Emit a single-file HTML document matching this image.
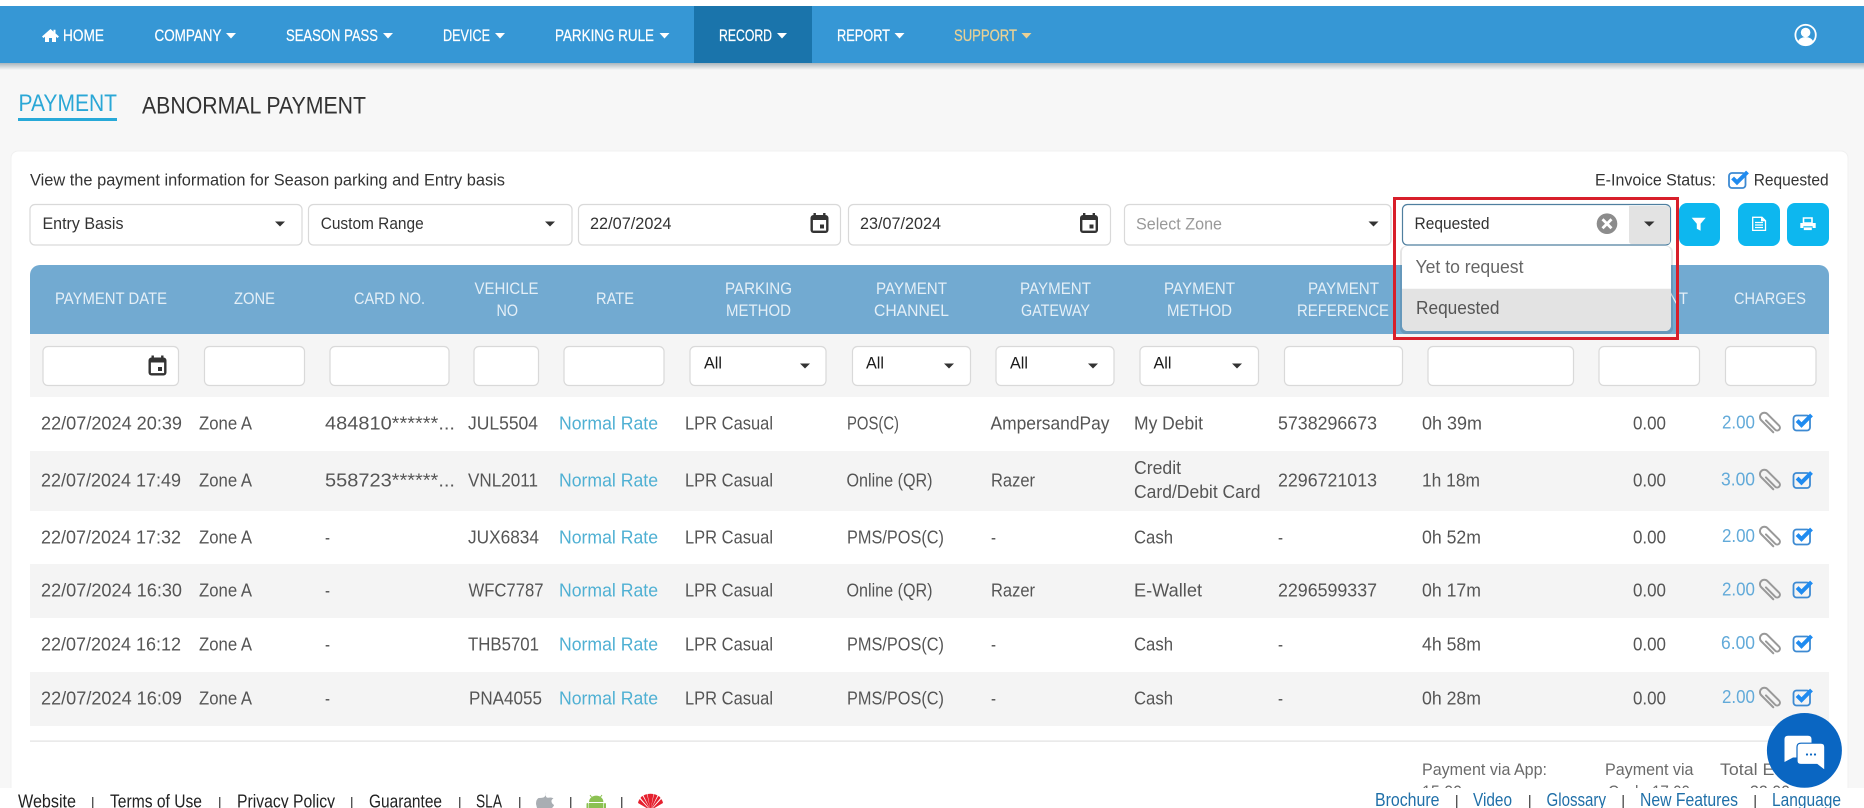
<!DOCTYPE html>
<html lang="en"><head><meta charset="utf-8"><title>Payment</title>
<style>
html,body{margin:0;padding:0;width:1864px;height:808px;overflow:hidden;background:#f7f7f7}
svg{display:block}
text{font-family:"Liberation Sans",sans-serif;white-space:pre}
.n{font-size:17px;fill:#fff;stroke:#fff;stroke-width:.25;transform:translateY(-1px)}
.v{font-size:17px;fill:#333}
.s{font-size:17px;fill:#333}
.h{font-size:16.5px;fill:#e4eff7;transform:translateY(-.6px)}
.r{font-size:18px;fill:#555;transform:translateY(-.8px)}
.l{font-size:18px;fill:#4fb0d3;transform:translateY(-.8px)}
.c{font-size:18px;fill:#62aad9;transform:translateY(-.8px)}
.a{font-size:16.5px;fill:#1c1c1c;transform:translateY(-.5px)}
.f{font-size:18px;fill:#222}
.g{font-size:18px;fill:#1f6fa8}
.p{font-size:17px;fill:#6a6a6a}
.b{fill:#fff;stroke:#d9d9d9;stroke-width:1.2}
symbol{overflow:visible}
</style></head><body>
<svg width="1864" height="808" viewBox="0 0 1864 808" xmlns="http://www.w3.org/2000/svg">
<defs>
<linearGradient id="sh" x1="0" y1="0" x2="0" y2="1"><stop offset="0" stop-color="#aab5bc"/><stop offset="1" stop-color="#f7f7f7"/></linearGradient>
<symbol id="cal" viewBox="0 0 18 20" width="18" height="20"><rect x="3" y="0" width="2.4" height="4" fill="#333"/><rect x="12.6" y="0" width="2.4" height="4" fill="#333"/><rect x="0" y="2" width="18" height="18" rx="3" fill="#333"/><rect x="2.4" y="7" width="13.2" height="10.6" fill="#fff"/><rect x="9.5" y="11.5" width="4" height="4" fill="#333"/></symbol>
<symbol id="clip" viewBox="0 0 20 20" width="20" height="20"><g transform="translate(10 10) rotate(-45)"><path d="M-1.4 -5 L-1.4 8 A2.8 2.8 0 0 0 4.2 8 L4.2 -8.5 A4.4 4.4 0 0 0 -4.6 -8.5 L-4.6 8.5" fill="none" stroke="#999" stroke-width="2" stroke-linecap="round"/></g></symbol>
<symbol id="chk" viewBox="0 0 21 18" width="21" height="18"><rect x="1" y="2.5" width="16.5" height="15" rx="3" fill="none" stroke="#3d8ad2" stroke-width="1.8"/><path d="M4.6 7.6 L9 12 L19 2" fill="none" stroke="#1f8bf0" stroke-width="4"/></symbol>
</defs>

<rect width="1864" height="808" fill="#f7f7f7"/>
<rect width="1864" height="6" fill="#fff"/>
<rect y="63" width="1864" height="7" fill="url(#sh)"/>
<rect y="6" width="1864" height="57" fill="#3697d5"/>
<rect x="694" y="6" width="118" height="57" fill="#1a74ab"/>

<path d="M50.5 29 L42 36.5 L43.5 38 L45 36.8 V42 H49 V38 H52 V42 H56 V36.8 L57.5 38 L59 36.5 L55.5 33.4 V29.8 H53.5 V31.6 Z" fill="#fff"/>
<text class="n" x="63" y="42" textLength="41" lengthAdjust="spacingAndGlyphs">HOME</text>
<text class="n" x="154.5" y="42" textLength="67" lengthAdjust="spacingAndGlyphs">COMPANY</text>
<path d="M226 33h10l-5 5.5z" fill="#fff"/>
<text class="n" x="286" y="42" textLength="92" lengthAdjust="spacingAndGlyphs">SEASON PASS</text>
<path d="M383 33h10l-5 5.5z" fill="#fff"/>
<text class="n" x="443" y="42" textLength="47" lengthAdjust="spacingAndGlyphs">DEVICE</text>
<path d="M495 33h10l-5 5.5z" fill="#fff"/>
<text class="n" x="555" y="42" textLength="99" lengthAdjust="spacingAndGlyphs">PARKING RULE</text>
<path d="M659.5 33h10l-5 5.5z" fill="#fff"/>
<text class="n" x="719" y="42" textLength="53" lengthAdjust="spacingAndGlyphs">RECORD</text>
<path d="M777 33h10l-5 5.5z" fill="#fff"/>
<text class="n" x="837" y="42" textLength="53" lengthAdjust="spacingAndGlyphs">REPORT</text>
<path d="M894.5 33h10l-5 5.5z" fill="#fff"/>
<text class="n" x="954" y="42" textLength="63" lengthAdjust="spacingAndGlyphs" style="fill:#e9d195;stroke:#e9d195">SUPPORT</text>
<path d="M1021.5 33h10l-5 5.5z" fill="#e9d195"/>

<circle cx="1805.6" cy="35" r="10.2" fill="none" stroke="#fff" stroke-width="1.8"/>
<circle cx="1805.6" cy="32.5" r="4.8" fill="#fff"/>
<path d="M1797.8 42 a8 6.5 0 0 1 15.6 0 a10 10 0 0 1 -15.6 0z" fill="#fff"/>

<text x="18.5" y="111" textLength="98.5" lengthAdjust="spacingAndGlyphs" style="font-size:24px;fill:#2aa7d6">PAYMENT</text>
<rect x="18" y="118" width="99" height="3" fill="#27a9d8"/>
<text x="142" y="113.5" textLength="224" lengthAdjust="spacingAndGlyphs" style="font-size:24px;fill:#333">ABNORMAL PAYMENT</text>

<rect x="11" y="151" width="1837" height="660" rx="7" fill="#fff" stroke="#f0f0f0"/>

<text class="v" x="30" y="185.5" textLength="475" lengthAdjust="spacingAndGlyphs">View the payment information for Season parking and Entry basis</text>
<text class="v" x="1595" y="185.5" textLength="121" lengthAdjust="spacingAndGlyphs">E-Invoice Status:</text>
<rect x="1729" y="173" width="16.5" height="15" rx="3" fill="none" stroke="#3d8ad2" stroke-width="1.8"/>
<path d="M1732.6 178 L1737 182.4 L1747.5 172" fill="none" stroke="#1f8bf0" stroke-width="4"/>
<text class="v" x="1753.7" y="185.5" textLength="75" lengthAdjust="spacingAndGlyphs">Requested</text>

<rect class="b" x="30" y="204.5" width="272" height="40.5" rx="5"/>
<text class="s" x="42.5" y="229" textLength="81" lengthAdjust="spacingAndGlyphs">Entry Basis</text>
<path d="M275 221.5h10l-5 5z" fill="#333"/>
<rect class="b" x="308.5" y="204.5" width="263.5" height="40.5" rx="5"/>
<text class="s" x="320.7" y="229" textLength="103" lengthAdjust="spacingAndGlyphs">Custom Range</text>
<path d="M545 221.5h10l-5 5z" fill="#333"/>
<rect class="b" x="578.5" y="204.5" width="262" height="40.5" rx="5"/>
<text class="s" x="590" y="229" textLength="81.5" lengthAdjust="spacingAndGlyphs">22/07/2024</text>
<use href="#cal" x="810.5" y="213"/>
<rect class="b" x="848.5" y="204.5" width="262" height="40.5" rx="5"/>
<text class="s" x="860" y="229" textLength="81" lengthAdjust="spacingAndGlyphs">23/07/2024</text>
<use href="#cal" x="1080" y="213"/>
<rect class="b" x="1124.5" y="204.5" width="266.5" height="40.5" rx="5"/>
<text class="s" x="1136" y="229.5" textLength="86" lengthAdjust="spacingAndGlyphs" style="fill:#999">Select Zone</text>
<path d="M1368.5 221.5h10l-5 5z" fill="#333"/>

<rect x="1679" y="203" width="41" height="43" rx="8" fill="#0db7ef"/>
<path d="M1691.7 217.7 H1705.7 L1700.6 223.8 V230.7 L1696.8 228.8 V223.8 Z" fill="#fff"/>
<rect x="1738" y="203" width="42" height="43" rx="8" fill="#0db7ef"/>
<path d="M1752.7 217.3 H1762 L1765.5 220.8 V230.4 H1752.7 Z" fill="none" stroke="#fff" stroke-width="1.3"/>
<path d="M1755 222.5h8M1755 225h8M1755 227.5h8" stroke="#fff" stroke-width="1.2"/>
<path d="M1761 217.3 v4 h4.5" fill="#fff"/>
<rect x="1787" y="203" width="42" height="43" rx="8" fill="#0db7ef"/>
<path d="M1803.5 218 H1812 V223 H1803.5 Z" fill="none" stroke="#fff" stroke-width="1.6"/>
<path d="M1800.3 223 H1815.7 V228 H1812.6 V226.2 H1803.4 V228 H1800.3 Z" fill="#fff"/>
<rect x="1803.8" y="227.4" width="8" height="2.7" fill="#fff"/>

<rect x="30" y="265" width="1799" height="69" fill="#72aad1"/>
<path d="M30 275 V265 H40 A10 10 0 0 0 30 275Z" fill="#fff"/>
<path d="M1829 275 V265 H1819 A10 10 0 0 1 1829 275Z" fill="#fff"/>

<text class="h" x="55" y="304.5" textLength="112" lengthAdjust="spacingAndGlyphs">PAYMENT DATE</text>
<text class="h" x="234" y="304.5" textLength="41" lengthAdjust="spacingAndGlyphs">ZONE</text>
<text class="h" x="354" y="304.5" textLength="71" lengthAdjust="spacingAndGlyphs">CARD NO.</text>
<text class="h" x="474.5" y="294.5" textLength="64" lengthAdjust="spacingAndGlyphs">VEHICLE</text>
<text class="h" x="496.5" y="316.5" textLength="21.5" lengthAdjust="spacingAndGlyphs">NO</text>
<text class="h" x="596" y="304.5" textLength="38" lengthAdjust="spacingAndGlyphs">RATE</text>
<text class="h" x="725" y="294.5" textLength="67" lengthAdjust="spacingAndGlyphs">PARKING</text>
<text class="h" x="726" y="316.5" textLength="65" lengthAdjust="spacingAndGlyphs">METHOD</text>
<text class="h" x="876" y="294.5" textLength="71" lengthAdjust="spacingAndGlyphs">PAYMENT</text>
<text class="h" x="874" y="316.5" textLength="75" lengthAdjust="spacingAndGlyphs">CHANNEL</text>
<text class="h" x="1020" y="294.5" textLength="71" lengthAdjust="spacingAndGlyphs">PAYMENT</text>
<text class="h" x="1021" y="316.5" textLength="69" lengthAdjust="spacingAndGlyphs">GATEWAY</text>
<text class="h" x="1164" y="294.5" textLength="71" lengthAdjust="spacingAndGlyphs">PAYMENT</text>
<text class="h" x="1167" y="316.5" textLength="65" lengthAdjust="spacingAndGlyphs">METHOD</text>
<text class="h" x="1308" y="294.5" textLength="71" lengthAdjust="spacingAndGlyphs">PAYMENT</text>
<text class="h" x="1297" y="316.5" textLength="92" lengthAdjust="spacingAndGlyphs">REFERENCE</text>
<text class="h" x="1610" y="304.5" textLength="78" lengthAdjust="spacingAndGlyphs">DISCOUNT</text>
<text class="h" x="1734" y="304.5" textLength="72" lengthAdjust="spacingAndGlyphs">CHARGES</text>

<rect x="30" y="334" width="1799" height="63" fill="#f5f5f5"/>
<rect class="b" x="43" y="346.5" width="135.5" height="39" rx="5"/>
<use href="#cal" x="148.5" y="355.5"/>
<rect class="b" x="204.5" y="346.5" width="100" height="39" rx="5"/>
<rect class="b" x="330" y="346.5" width="119" height="39" rx="5"/>
<rect class="b" x="474" y="346.5" width="64.5" height="39" rx="5"/>
<rect class="b" x="564" y="346.5" width="100" height="39" rx="5"/>
<rect class="b" x="690" y="346.5" width="136" height="39" rx="5"/>
<text class="a" x="704" y="369" textLength="18" lengthAdjust="spacingAndGlyphs">All</text>
<path d="M800 363.5h10l-5 5z" fill="#333"/>
<rect class="b" x="852.5" y="346.5" width="118" height="39" rx="5"/>
<text class="a" x="866" y="369" textLength="18" lengthAdjust="spacingAndGlyphs">All</text>
<path d="M944 363.5h10l-5 5z" fill="#333"/>
<rect class="b" x="996" y="346.5" width="118" height="39" rx="5"/>
<text class="a" x="1010" y="369" textLength="18" lengthAdjust="spacingAndGlyphs">All</text>
<path d="M1088 363.5h10l-5 5z" fill="#333"/>
<rect class="b" x="1140" y="346.5" width="118.5" height="39" rx="5"/>
<text class="a" x="1153.5" y="369" textLength="18" lengthAdjust="spacingAndGlyphs">All</text>
<path d="M1232 363.5h10l-5 5z" fill="#333"/>
<rect class="b" x="1284.5" y="346.5" width="118" height="39" rx="5"/>
<rect class="b" x="1428" y="346.5" width="145.5" height="39" rx="5"/>
<rect class="b" x="1599" y="346.5" width="100.5" height="39" rx="5"/>
<rect class="b" x="1725.5" y="346.5" width="90.5" height="39" rx="5"/>

<rect x="30" y="451" width="1799" height="60" fill="#f4f4f4"/>
<rect x="30" y="564" width="1799" height="54" fill="#f4f4f4"/>
<rect x="30" y="672" width="1799" height="54" fill="#f4f4f4"/>
<rect x="30" y="740.5" width="1799" height="1.2" fill="#e2e2e2"/>

<!-- row 1 -->
<text class="r" x="41" y="430.5" textLength="141" lengthAdjust="spacingAndGlyphs">22/07/2024 20:39</text>
<text class="r" x="199" y="430.5" textLength="53" lengthAdjust="spacingAndGlyphs">Zone A</text>
<text class="r" x="325" y="430.5" textLength="130" lengthAdjust="spacingAndGlyphs">484810******...</text>
<text class="r" x="468" y="430.5" textLength="70" lengthAdjust="spacingAndGlyphs">JUL5504</text>
<text class="l" x="559" y="430.5" textLength="99" lengthAdjust="spacingAndGlyphs">Normal Rate</text>
<text class="r" x="685" y="430.5" textLength="88" lengthAdjust="spacingAndGlyphs">LPR Casual</text>
<text class="r" x="847" y="430.5" textLength="52" lengthAdjust="spacingAndGlyphs">POS(C)</text>
<text class="r" x="990.5" y="430.5" textLength="119" lengthAdjust="spacingAndGlyphs">AmpersandPay</text>
<text class="r" x="1134" y="430.5" textLength="69" lengthAdjust="spacingAndGlyphs">My Debit</text>
<text class="r" x="1278" y="430.5" textLength="99" lengthAdjust="spacingAndGlyphs">5738296673</text>
<text class="r" x="1422" y="430.5" textLength="60" lengthAdjust="spacingAndGlyphs">0h 39m</text>
<text class="r" x="1633" y="430.5" textLength="33" lengthAdjust="spacingAndGlyphs">0.00</text>
<text class="c" x="1722" y="429.5" textLength="33" lengthAdjust="spacingAndGlyphs">2.00</text>
<use href="#clip" x="1760.5" y="413"/><use href="#chk" x="1792.5" y="413"/>
<!-- row 2 -->
<text class="r" x="41" y="487.5" textLength="140" lengthAdjust="spacingAndGlyphs">22/07/2024 17:49</text>
<text class="r" x="199" y="487.5" textLength="53" lengthAdjust="spacingAndGlyphs">Zone A</text>
<text class="r" x="325" y="487.5" textLength="130" lengthAdjust="spacingAndGlyphs">558723******...</text>
<text class="r" x="468" y="487.5" textLength="70" lengthAdjust="spacingAndGlyphs">VNL2011</text>
<text class="l" x="559" y="487.5" textLength="99" lengthAdjust="spacingAndGlyphs">Normal Rate</text>
<text class="r" x="685" y="487.5" textLength="88" lengthAdjust="spacingAndGlyphs">LPR Casual</text>
<text class="r" x="846.5" y="487.5" textLength="86" lengthAdjust="spacingAndGlyphs">Online (QR)</text>
<text class="r" x="991" y="487.5" textLength="44" lengthAdjust="spacingAndGlyphs">Razer</text>
<text class="r" x="1134" y="475" textLength="47" lengthAdjust="spacingAndGlyphs">Credit</text>
<text class="r" x="1134" y="499" textLength="126.5" lengthAdjust="spacingAndGlyphs">Card/Debit Card</text>
<text class="r" x="1278" y="487.5" textLength="99" lengthAdjust="spacingAndGlyphs">2296721013</text>
<text class="r" x="1422" y="487.5" textLength="58" lengthAdjust="spacingAndGlyphs">1h 18m</text>
<text class="r" x="1633" y="487.5" textLength="33" lengthAdjust="spacingAndGlyphs">0.00</text>
<text class="c" x="1721" y="486.5" textLength="34" lengthAdjust="spacingAndGlyphs">3.00</text>
<use href="#clip" x="1760.5" y="470"/><use href="#chk" x="1792.5" y="470.5"/>
<!-- row 3 -->
<text class="r" x="41" y="544.5" textLength="140" lengthAdjust="spacingAndGlyphs">22/07/2024 17:32</text>
<text class="r" x="199" y="544.5" textLength="53" lengthAdjust="spacingAndGlyphs">Zone A</text>
<text class="r" x="325" y="544.5" textLength="5" lengthAdjust="spacingAndGlyphs">-</text>
<text class="r" x="468" y="544.5" textLength="71" lengthAdjust="spacingAndGlyphs">JUX6834</text>
<text class="l" x="559" y="544.5" textLength="99" lengthAdjust="spacingAndGlyphs">Normal Rate</text>
<text class="r" x="685" y="544.5" textLength="88" lengthAdjust="spacingAndGlyphs">LPR Casual</text>
<text class="r" x="847" y="544.5" textLength="97" lengthAdjust="spacingAndGlyphs">PMS/POS(C)</text>
<text class="r" x="991" y="544.5" textLength="5" lengthAdjust="spacingAndGlyphs">-</text>
<text class="r" x="1134" y="544.5" textLength="39" lengthAdjust="spacingAndGlyphs">Cash</text>
<text class="r" x="1278" y="544.5" textLength="5" lengthAdjust="spacingAndGlyphs">-</text>
<text class="r" x="1422" y="544.5" textLength="59" lengthAdjust="spacingAndGlyphs">0h 52m</text>
<text class="r" x="1633" y="544.5" textLength="33" lengthAdjust="spacingAndGlyphs">0.00</text>
<text class="c" x="1722" y="543" textLength="33" lengthAdjust="spacingAndGlyphs">2.00</text>
<use href="#clip" x="1760.5" y="527"/><use href="#chk" x="1792.5" y="527"/>
<!-- row 4 -->
<text class="r" x="41" y="597.5" textLength="141" lengthAdjust="spacingAndGlyphs">22/07/2024 16:30</text>
<text class="r" x="199" y="597.5" textLength="53" lengthAdjust="spacingAndGlyphs">Zone A</text>
<text class="r" x="325" y="597.5" textLength="5" lengthAdjust="spacingAndGlyphs">-</text>
<text class="r" x="468.5" y="597.5" textLength="75" lengthAdjust="spacingAndGlyphs">WFC7787</text>
<text class="l" x="559" y="597.5" textLength="99" lengthAdjust="spacingAndGlyphs">Normal Rate</text>
<text class="r" x="685" y="597.5" textLength="88" lengthAdjust="spacingAndGlyphs">LPR Casual</text>
<text class="r" x="846.5" y="597.5" textLength="86" lengthAdjust="spacingAndGlyphs">Online (QR)</text>
<text class="r" x="991" y="597.5" textLength="44" lengthAdjust="spacingAndGlyphs">Razer</text>
<text class="r" x="1134" y="597.5" textLength="68" lengthAdjust="spacingAndGlyphs">E-Wallet</text>
<text class="r" x="1278" y="597.5" textLength="99" lengthAdjust="spacingAndGlyphs">2296599337</text>
<text class="r" x="1422" y="597.5" textLength="59" lengthAdjust="spacingAndGlyphs">0h 17m</text>
<text class="r" x="1633" y="597.5" textLength="33" lengthAdjust="spacingAndGlyphs">0.00</text>
<text class="c" x="1722" y="596.5" textLength="33" lengthAdjust="spacingAndGlyphs">2.00</text>
<use href="#clip" x="1760.5" y="580"/><use href="#chk" x="1792.5" y="580"/>
<!-- row 5 -->
<text class="r" x="41" y="651.5" textLength="140" lengthAdjust="spacingAndGlyphs">22/07/2024 16:12</text>
<text class="r" x="199" y="651.5" textLength="53" lengthAdjust="spacingAndGlyphs">Zone A</text>
<text class="r" x="325" y="651.5" textLength="5" lengthAdjust="spacingAndGlyphs">-</text>
<text class="r" x="468" y="651.5" textLength="71" lengthAdjust="spacingAndGlyphs">THB5701</text>
<text class="l" x="559" y="651.5" textLength="99" lengthAdjust="spacingAndGlyphs">Normal Rate</text>
<text class="r" x="685" y="651.5" textLength="88" lengthAdjust="spacingAndGlyphs">LPR Casual</text>
<text class="r" x="847" y="651.5" textLength="97" lengthAdjust="spacingAndGlyphs">PMS/POS(C)</text>
<text class="r" x="991" y="651.5" textLength="5" lengthAdjust="spacingAndGlyphs">-</text>
<text class="r" x="1134" y="651.5" textLength="39" lengthAdjust="spacingAndGlyphs">Cash</text>
<text class="r" x="1278" y="651.5" textLength="5" lengthAdjust="spacingAndGlyphs">-</text>
<text class="r" x="1422" y="651.5" textLength="59" lengthAdjust="spacingAndGlyphs">4h 58m</text>
<text class="r" x="1633" y="651.5" textLength="33" lengthAdjust="spacingAndGlyphs">0.00</text>
<text class="c" x="1721" y="650" textLength="34" lengthAdjust="spacingAndGlyphs">6.00</text>
<use href="#clip" x="1760.5" y="634"/><use href="#chk" x="1792.5" y="634"/>
<!-- row 6 -->
<text class="r" x="41" y="705.5" textLength="141" lengthAdjust="spacingAndGlyphs">22/07/2024 16:09</text>
<text class="r" x="199" y="705.5" textLength="53" lengthAdjust="spacingAndGlyphs">Zone A</text>
<text class="r" x="325" y="705.5" textLength="5" lengthAdjust="spacingAndGlyphs">-</text>
<text class="r" x="469" y="705.5" textLength="73" lengthAdjust="spacingAndGlyphs">PNA4055</text>
<text class="l" x="559" y="705.5" textLength="99" lengthAdjust="spacingAndGlyphs">Normal Rate</text>
<text class="r" x="685" y="705.5" textLength="88" lengthAdjust="spacingAndGlyphs">LPR Casual</text>
<text class="r" x="847" y="705.5" textLength="97" lengthAdjust="spacingAndGlyphs">PMS/POS(C)</text>
<text class="r" x="991" y="705.5" textLength="5" lengthAdjust="spacingAndGlyphs">-</text>
<text class="r" x="1134" y="705.5" textLength="39" lengthAdjust="spacingAndGlyphs">Cash</text>
<text class="r" x="1278" y="705.5" textLength="5" lengthAdjust="spacingAndGlyphs">-</text>
<text class="r" x="1422" y="705.5" textLength="59" lengthAdjust="spacingAndGlyphs">0h 28m</text>
<text class="r" x="1633" y="705.5" textLength="33" lengthAdjust="spacingAndGlyphs">0.00</text>
<text class="c" x="1722" y="704" textLength="33" lengthAdjust="spacingAndGlyphs">2.00</text>
<use href="#clip" x="1760.5" y="688"/><use href="#chk" x="1792.5" y="688"/>

<!-- summary -->
<text class="p" x="1422" y="775" textLength="125" lengthAdjust="spacingAndGlyphs">Payment via App:</text>
<text class="p" x="1422" y="797" textLength="40" lengthAdjust="spacingAndGlyphs">15.00</text>
<text class="p" x="1605" y="775" textLength="88.5" lengthAdjust="spacingAndGlyphs">Payment via</text>
<text class="p" x="1608" y="797" textLength="82" lengthAdjust="spacingAndGlyphs">Cash: 17.00</text>
<text class="p" x="1720" y="775" textLength="80" lengthAdjust="spacingAndGlyphs">Total Earn</text>
<text class="p" x="1750" y="797" textLength="40" lengthAdjust="spacingAndGlyphs">32.00</text>

<!-- dropdown -->
<rect x="1402.5" y="204.5" width="268" height="40.5" rx="5" fill="#fff" stroke="#4f7f9f" stroke-width="1.2"/>
<text class="s" x="1414.5" y="229" textLength="75" lengthAdjust="spacingAndGlyphs">Requested</text>
<circle cx="1607" cy="223.7" r="10.3" fill="#8c8c8c"/>
<path d="M1602.5 219.2 L1611.5 228.2 M1611.5 219.2 L1602.5 228.2" stroke="#fff" stroke-width="2.8"/>
<path d="M1629 206 H1667 Q1670 206 1670 209 V241 Q1670 244 1667 244 H1632 Q1629 244 1629 241 Z" fill="#e3e3e3"/>
<path d="M1644 221.5h10.5l-5.2 5z" fill="#333"/>

<rect x="1400" y="246" width="273" height="88" rx="6" fill="#000" opacity=".1"/>
<rect x="1402" y="246" width="269" height="85" rx="6" fill="#fff"/>
<path d="M1402 288.7 H1671 V325 Q1671 331 1665 331 H1408 Q1402 331 1402 325 Z" fill="#e3e3e3"/>
<text class="r" x="1415.5" y="274" textLength="108" lengthAdjust="spacingAndGlyphs" style="fill:#666">Yet to request</text>
<text class="r" x="1416" y="315" textLength="83.5" lengthAdjust="spacingAndGlyphs" style="fill:#555">Requested</text>

<rect x="1394.5" y="198.5" width="283" height="140" fill="none" stroke="#d81f2a" stroke-width="3"/>

<!-- chat -->
<ellipse cx="1804.4" cy="750.4" rx="37.5" ry="37.4" fill="#0a66c2"/>
<path d="M1788 735.7 H1808 Q1811.5 735.7 1811.5 739 V754 Q1811.5 757.5 1808 757.5 H1793 L1784.5 762 V739 Q1784.5 735.7 1788 735.7 Z" fill="#fff"/>
<path d="M1801 743.2 H1821 Q1824.8 743.2 1824.8 747 V770.5 L1817 764.5 H1801 Q1797 764.5 1797 761 V747 Q1797 743.2 1801 743.2 Z" fill="#fff" stroke="#0a66c2" stroke-width="1.2"/>
<circle cx="1807" cy="754.5" r="1.1" fill="#0a66c2"/><circle cx="1811" cy="754.5" r="1.1" fill="#0a66c2"/><circle cx="1815" cy="754.5" r="1.1" fill="#0a66c2"/>

<!-- footer -->
<rect y="788" width="1864" height="20" fill="#fff"/>
<text class="f" x="18" y="807.5" textLength="58" lengthAdjust="spacingAndGlyphs">Website</text>
<rect x="92" y="797" width="1.4" height="11" fill="#555"/>
<text class="f" x="110" y="807.5" textLength="92" lengthAdjust="spacingAndGlyphs">Terms of Use</text>
<rect x="219" y="797" width="1.4" height="11" fill="#555"/>
<text class="f" x="237" y="807.5" textLength="98" lengthAdjust="spacingAndGlyphs">Privacy Policy</text>
<rect x="351" y="797" width="1.4" height="11" fill="#555"/>
<text class="f" x="369" y="807.5" textLength="73" lengthAdjust="spacingAndGlyphs">Guarantee</text>
<rect x="459" y="797" width="1.4" height="11" fill="#555"/>
<text class="f" x="476" y="807.5" textLength="26" lengthAdjust="spacingAndGlyphs">SLA</text>
<rect x="519" y="797" width="1.4" height="11" fill="#555"/>
<path d="M546 792 Q546.5 796 543.5 797.5 Q541.5 798 538.5 798 Q536 799.5 536 804 L537 808 H552 Q554 806 554 805 Q551 803 551.5 800.5 Q552 799 553.5 798.5 Q551.5 797 548 797.8 Q545 798 546 792Z" fill="#a9aeb3"/>
<rect x="570" y="797" width="1.4" height="11" fill="#555"/>
<path d="M590 795 l1.5 2 M602 795 l-1.5 2" stroke="#8cc152" stroke-width="1"/>
<path d="M589 802 a7.2 6.4 0 0 1 14.4 0 Z" fill="#8cc152"/>
<rect x="589" y="803" width="14.4" height="6" fill="#8cc152"/>
<rect x="586.5" y="803" width="2" height="6" rx="1" fill="#8cc152"/><rect x="604" y="803" width="2" height="6" rx="1" fill="#8cc152"/>
<rect x="621" y="797" width="1.4" height="11" fill="#555"/>
<g fill="#e5202e">
<path d="M650.5 810 L647.5 794 Q650.5 793.5 653.5 794Z"/>
<path d="M650.5 810 L643.5 795.5 Q645 794.5 647 794.3Z"/>
<path d="M650.5 810 L657.5 795.5 Q656 794.5 654 794.3Z"/>
<path d="M650.5 810 L640.5 798 Q641 796.5 642.7 796Z"/>
<path d="M650.5 810 L660.5 798 Q660 796.5 658.3 796Z"/>
<path d="M650 810 L638 803 Q638.5 800.5 639.7 799Z"/>
<path d="M651 810 L663 803 Q662.5 800.5 661.3 799Z"/>
</g>
<text class="g" x="1375" y="806" textLength="64.5" lengthAdjust="spacingAndGlyphs">Brochure</text>
<rect x="1456" y="795" width="1.4" height="13" fill="#555"/>
<text class="g" x="1473" y="806" textLength="39" lengthAdjust="spacingAndGlyphs">Video</text>
<rect x="1529" y="795" width="1.4" height="13" fill="#555"/>
<text class="g" x="1546.5" y="806" textLength="59.5" lengthAdjust="spacingAndGlyphs">Glossary</text>
<rect x="1622.5" y="795" width="1.4" height="13" fill="#555"/>
<text class="g" x="1640" y="806" textLength="98" lengthAdjust="spacingAndGlyphs">New Features</text>
<rect x="1754.5" y="795" width="1.4" height="13" fill="#555"/>
<text class="g" x="1772" y="806" textLength="69" lengthAdjust="spacingAndGlyphs">Language</text>
</svg>
</body></html>
